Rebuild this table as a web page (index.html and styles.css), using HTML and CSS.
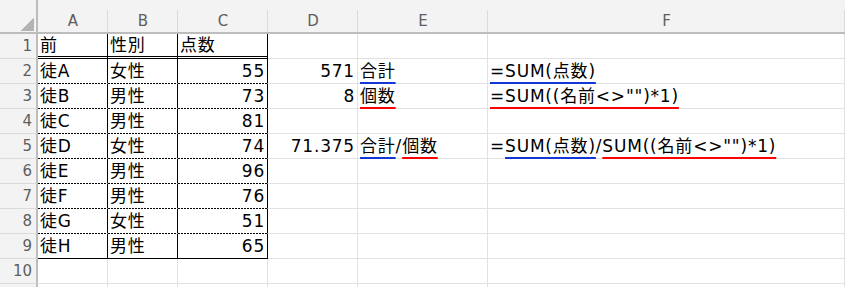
FILE: index.html
```html
<!DOCTYPE html>
<html lang="ja">
<head>
<meta charset="utf-8">
<title>Sheet</title>
<link rel="stylesheet" href="styles.css">
</head>
<body>
<div class="sheet">
  <div class="corner"><span class="tri"></span></div>
  <div class="col">A</div><div class="col">B</div><div class="col">C</div><div class="col">D</div><div class="col">E</div><div class="col">F</div>

  <div class="rh">1</div>
  <div class="cell t head">前</div><div class="cell t head">性別</div><div class="cell t head">点数</div>
  <div class="cell"></div><div class="cell"></div><div class="cell"></div>

  <div class="rh">2</div>
  <div class="cell t dash">徒A</div><div class="cell t dash">女性</div><div class="cell t dash num">55</div>
  <div class="cell num">571</div><div class="cell"><span class="ub">合計</span></div><div class="cell"><span class="ub">=SUM(点数)</span></div>

  <div class="rh">3</div>
  <div class="cell t dash">徒B</div><div class="cell t dash">男性</div><div class="cell t dash num">73</div>
  <div class="cell num">8</div><div class="cell"><span class="ur">個数</span></div><div class="cell"><span class="ur">=SUM((名前&lt;&gt;"")*1)</span></div>

  <div class="rh">4</div>
  <div class="cell t dash">徒C</div><div class="cell t dash">男性</div><div class="cell t dash num">81</div>
  <div class="cell"></div><div class="cell"></div><div class="cell"></div>

  <div class="rh">5</div>
  <div class="cell t dash">徒D</div><div class="cell t dash">女性</div><div class="cell t dash num">74</div>
  <div class="cell num">71.375</div><div class="cell"><span class="ub">合計</span>/<span class="ur">個数</span></div><div class="cell">=<span class="ub">SUM(点数)</span>/<span class="ur">SUM((名前&lt;&gt;"")*1)</span></div>

  <div class="rh">6</div>
  <div class="cell t dash">徒E</div><div class="cell t dash">男性</div><div class="cell t dash num">96</div>
  <div class="cell"></div><div class="cell"></div><div class="cell"></div>

  <div class="rh">7</div>
  <div class="cell t dash">徒F</div><div class="cell t dash">男性</div><div class="cell t dash num">76</div>
  <div class="cell"></div><div class="cell"></div><div class="cell"></div>

  <div class="rh">8</div>
  <div class="cell t dash">徒G</div><div class="cell t dash">女性</div><div class="cell t dash num">51</div>
  <div class="cell"></div><div class="cell"></div><div class="cell"></div>

  <div class="rh">9</div>
  <div class="cell t last">徒H</div><div class="cell t last">男性</div><div class="cell t last num">65</div>
  <div class="cell"></div><div class="cell"></div><div class="cell"></div>

  <div class="rh">10</div>
  <div class="cell"></div><div class="cell"></div><div class="cell"></div>
  <div class="cell"></div><div class="cell"></div><div class="cell"></div>

  <div class="rh stub"></div>
  <div class="cell stub"></div><div class="cell stub"></div><div class="cell stub"></div>
  <div class="cell stub"></div><div class="cell stub"></div><div class="cell stub"></div>
</div>
</body>
</html>
```

FILE: styles.css
```css
html, body {
  margin: 0;
  background: #ffffff;
}

body {
  font-family: "DejaVu Sans", "Noto Sans CJK JP", sans-serif;
}

.sheet {
  display: grid;
  grid-template-columns: 38px 70px 70px 90px 90px 130px 357px;
  grid-template-rows: 34px repeat(10, 25px) 3px;
}

.corner {
  box-sizing: border-box;
  background: #f3f3f3;
  border-right: 2px solid #bdbdbd;
  border-bottom: 2px solid #bdbdbd;
  display: flex;
  justify-content: flex-end;
  align-items: flex-end;
  padding: 0 2px 1px 0;
}

.tri {
  width: 14px;
  height: 14px;
  background: linear-gradient(to bottom right, transparent 50%, #b3b3b3 50%);
}

.col {
  box-sizing: border-box;
  background: linear-gradient(#dadada, #dadada) right 0 top 10px / 1px 100% no-repeat, #f3f3f3;
  border-bottom: 2px solid #bdbdbd;
  padding-top: 10px;
  line-height: 22px;
  font-size: 15px;
  color: #5e5e5e;
  text-align: center;
}

.rh {
  box-sizing: border-box;
  background: #f3f3f3;
  border-right: 2px solid #bdbdbd;
  border-bottom: 1px solid #dadada;
  padding-right: 4px;
  text-align: right;
  font-size: 15px;
  line-height: 24px;
  color: #5e5e5e;
}

.cell {
  box-sizing: border-box;
  border-right: 1px solid #e1e1e1;
  border-bottom: 1px solid #e1e1e1;
  padding: 0 2px;
  font-size: 17px;
  line-height: 24px;
  letter-spacing: 0.8px;
  color: #000;
  white-space: nowrap;
}

.stub {
  border-bottom: none;
}

.num {
  text-align: right;
  padding-right: 2px;
}

.t {
  border-right-color: #000;
}

.head {
  border-bottom: 3px double #000;
  line-height: 22px;
}

.dash {
  border-bottom-color: transparent;
  background-image: linear-gradient(to right, #000 2px, transparent 2px);
  background-origin: border-box;
  background-size: 3px 1px;
  background-repeat: repeat-x;
  background-position: left bottom;
}

.last {
  border-bottom-color: #000;
}

.ub,
.ur {
  text-decoration-line: underline;
  text-decoration-thickness: 2px;
  text-underline-offset: 5px;
  text-decoration-skip-ink: none;
}

.ub {
  text-decoration-color: #1236d8;
}

.ur {
  text-decoration-color: #ff0000;
}
```
